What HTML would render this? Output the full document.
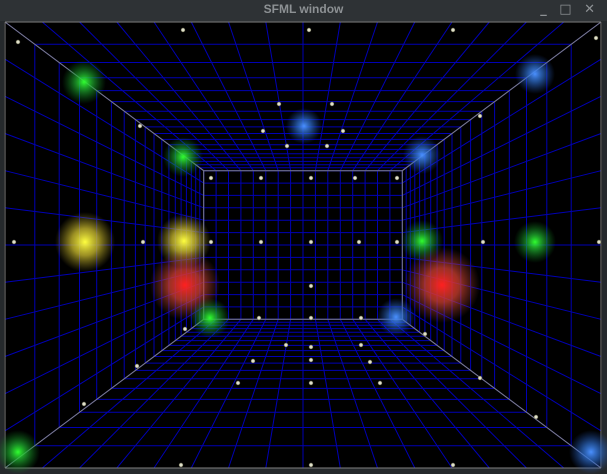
<!DOCTYPE html>
<html><head><style>
html,body{margin:0;padding:0;background:#25292c;width:607px;height:474px;overflow:hidden}
#t{position:absolute;left:0;top:0;width:607px;height:21px;background:#2e3235;color:#8d9194;font:bold 12px "Liberation Sans",sans-serif;text-align:center;line-height:19px}
#c{position:absolute;left:4px;top:22px;width:598px;height:446px;background:#000}
svg{position:absolute;left:0;top:0}
</style></head><body>
<div id="t">SFML window</div>
<div style="position:absolute;right:8px;top:2px;color:#8d9194;font:bold 13px 'DejaVu Sans',sans-serif;letter-spacing:4px">_ □ ✕</div>
<div id="c"></div>
<svg id="s" width="607" height="474" viewBox="0 0 607 474">
<defs>
<radialGradient id="gg"><stop offset="0" stop-color="#30ff30"/><stop offset=".4" stop-color="#20b030" stop-opacity=".7"/><stop offset="1" stop-color="#108020" stop-opacity="0"/></radialGradient>
<radialGradient id="gb"><stop offset="0" stop-color="#4a90ff"/><stop offset=".4" stop-color="#3070d0" stop-opacity=".7"/><stop offset="1" stop-color="#2050b0" stop-opacity="0"/></radialGradient>
<radialGradient id="gy"><stop offset="0" stop-color="#ffff40"/><stop offset=".45" stop-color="#d0c030" stop-opacity=".75"/><stop offset="1" stop-color="#a09020" stop-opacity="0"/></radialGradient>
<radialGradient id="gr"><stop offset="0" stop-color="#ff2020"/><stop offset=".45" stop-color="#d04030" stop-opacity=".75"/><stop offset="1" stop-color="#a04030" stop-opacity="0"/></radialGradient>
<radialGradient id="dt"><stop offset="0" stop-color="#fff"/><stop offset=".6" stop-color="#c8c8a8"/><stop offset="1" stop-color="#606050"/></radialGradient>
</defs>
<g id="grid" stroke="#0000b4" stroke-width="1" fill="none"></g>
<g id="gl" stroke="#808080" stroke-width="1" fill="none"></g>
<g id="lights"></g>
<g id="dots"></g>
</svg>
<script>
var cx=303,cy=245,W=298,H=223;
function P(x,y,z){return [cx+x*W/z,cy+y*H/z];}
var s='';
function L(a,b){s+='<line x1="'+a[0].toFixed(1)+'" y1="'+a[1].toFixed(1)+'" x2="'+b[0].toFixed(1)+'" y2="'+b[1].toFixed(1)+'"/>';}
for(var k=0;k<=18;k++){var z=1+k/9;
 L(P(-1,-1,z),P(1,-1,z));L(P(-1,1,z),P(1,1,z));L(P(-1,-1,z),P(-1,1,z));L(P(1,-1,z),P(1,1,z));}
for(var i=0;i<=16;i++){var x=-1+i/8;L(P(x,-1,1),P(x,-1,3));L(P(x,1,1),P(x,1,3));L(P(x,-1,3),P(x,1,3));}
for(var j=0;j<=12;j++){var y=-1+j/6;L(P(-1,y,1),P(-1,y,3));L(P(1,y,1),P(1,y,3));L(P(-1,y,3),P(1,y,3));}
document.getElementById('grid').innerHTML=s;s='';
var cs=[[-1,-1],[1,-1],[1,1],[-1,1]];
for(var c=0;c<4;c++){L(P(cs[c][0],cs[c][1],1),P(cs[c][0],cs[c][1],3));L(P(cs[c][0],cs[c][1],3),P(cs[(c+1)%4][0],cs[(c+1)%4][1],3));L(P(cs[c][0],cs[c][1],1),P(cs[(c+1)%4][0],cs[(c+1)%4][1],1));}
document.getElementById('gl').innerHTML=s;
var lt=[[84,82,22,'gg'],[535,74,20,'gb'],[304,126,18,'gb'],[183,157,20,'gg'],[422,155,19,'gb'],[85,242,30,'gy'],[184,241,27,'gy'],[422,241,21,'gg'],[535,242,21,'gg'],[185,285,35,'gr'],[442,285,38,'gr'],[210,318,20,'gg'],[396,317,19,'gb'],[18,452,22,'gg'],[591,452,22,'gb']];
s='';lt.forEach(function(l){s+='<circle cx="'+l[0]+'" cy="'+l[1]+'" r="'+l[2]+'" fill="url(#'+l[3]+')"/>';});
document.getElementById('lights').innerHTML=s;
var d=[[18,42],[183,30],[309,30],[453,30],[596,38],[140,126],[279,104],[332,104],[263,131],[343,131],[287,146],[327,146],[480,116],[211,178],[261,178],[311,178],[355,178],[397,178],[14,242],[143,242],[211,242],[261,242],[311,242],[359,242],[397,242],[483,242],[599,242],[311,286],[259,318],[311,318],[361,318],[185,329],[425,334],[286,345],[311,347],[361,345],[253,361],[311,360],[370,362],[137,366],[480,378],[238,383],[311,383],[380,383],[84,404],[536,417],[181,465],[311,465],[453,465]];
s='';d.forEach(function(p){s+='<circle cx="'+p[0]+'" cy="'+p[1]+'" r="2.2" fill="url(#dt)"/>';});
document.getElementById('dots').innerHTML=s;
</script>
</body></html>
